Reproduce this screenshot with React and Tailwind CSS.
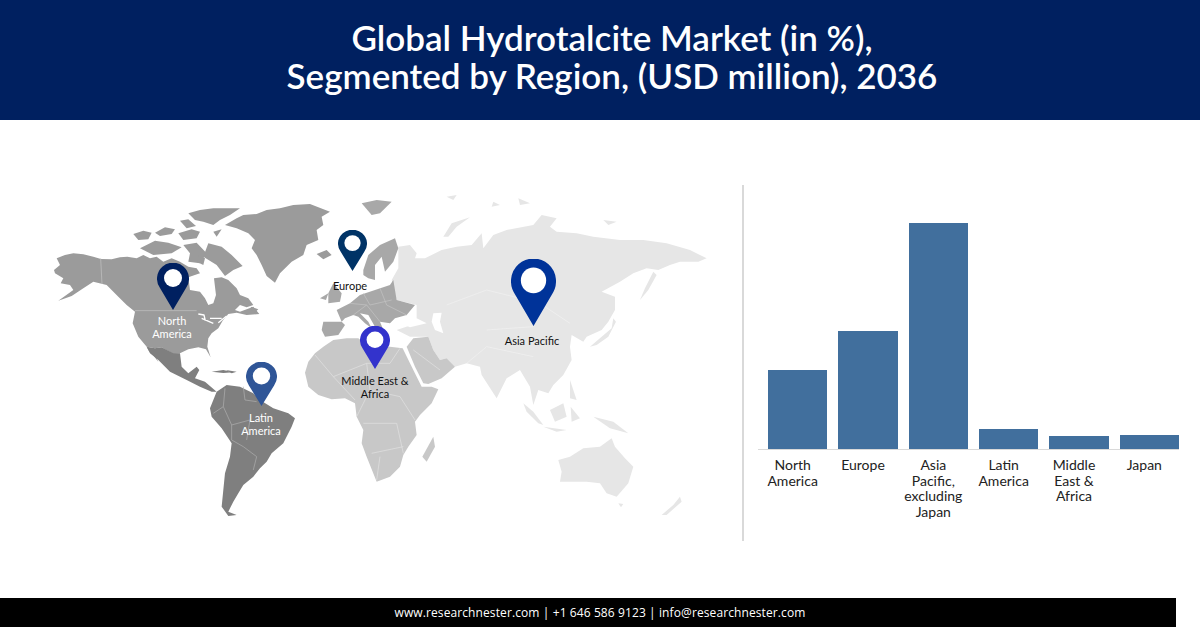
const lato = { fontFamily: 'Lato, "Liberation Sans", sans-serif' };

const bars = [
  { label: ['North', 'America'], height: 'h-[79px]' },
  { label: ['Europe'], height: 'h-[118px]' },
  { label: ['Asia', 'Pacific,', 'excluding', 'Japan'], height: 'h-[226px]' },
  { label: ['Latin', 'America'], height: 'h-[20px]' },
  { label: ['Middle', 'East &', 'Africa'], height: 'h-[13px]' },
  { label: ['Japan'], height: 'h-[14px]' },
];

const pins = [
  { box: 'left-[157px] top-[143px] w-[32px] h-[47px]', color: '#002060' },
  { box: 'left-[338px] top-[110px] w-[29px] h-[41px]', color: '#003366' },
  { box: 'left-[246px] top-[242px] w-[31px] h-[44px]', color: '#2f5597' },
  { box: 'left-[360px] top-[206px] w-[30px] h-[43px]', color: '#3333cc' },
  { box: 'left-[511px] top-[139px] w-[45px] h-[67px]', color: '#003399' },
];

const labels = [
  { box: 'left-[132px] top-[194px] w-[80px] text-white', text: ['North', 'America'] },
  { box: 'left-[310px] top-[159px] w-[80px] text-[#111]', text: ['Europe'] },
  { box: 'left-[221px] top-[291px] w-[80px] text-white', text: ['Latin', 'America'] },
  { box: 'left-[325px] top-[254px] w-[100px] text-[#111]', text: ['Middle East &', 'Africa'] },
  { box: 'left-[482px] top-[214px] w-[100px] text-[#111]', text: ['Asia Pacific'] },
];

function Pin({ box, color }) {
  return (
    <svg className={`absolute ${box}`} viewBox="0 0 32 47" preserveAspectRatio="none">
      <path d="M16 47 L3 25 A16 16 0 1 1 29 25 Z" fill={color} />
      <circle cx="16" cy="15" r="9" fill="#fff" />
    </svg>
  );
}

function WorldMap() {
  return (
    <svg className="block ml-[40px] mt-[70px]" width="680" height="340" viewBox="40 190 680 340">
      {/* traced at 3x, americas */}
      <g transform="translate(40 190) scale(0.3333)" strokeLinejoin="round">
        <g fill="#9b9b9b">
          <path d="M42 240 L60 225 L50 205 L75 195 L100 190 L130 193 L160 200 L183 207 L215 208 L240 202 L262 200 L290 205 L310 195 L330 205 L350 200 L370 215 L395 205 L420 215 L445 230 L470 235 L480 250 L445 262 L450 300 L480 305 L495 325 L505 345 L520 340 L528 315 L525 290 L522 265 L545 262 L565 270 L590 295 L600 315 L625 325 L640 345 L620 352 L600 345 L585 360 L600 365 L640 350 L658 372 L620 375 L590 368 L565 372 L548 392 L535 415 L515 430 L505 445 L502 470 L512 502 L498 478 L475 472 L445 478 L420 490 L400 492 L365 472 L345 475 L320 470 L295 440 L278 400 L285 365 L260 345 L235 320 L200 285 L160 275 L130 295 L95 318 L55 332 L100 300 L90 285 L62 280 L70 265 L45 250 Z" />
          <path d="M555 105 L590 85 L610 75 L650 72 L680 60 L720 55 L760 45 L810 42 L870 65 L845 80 L850 105 L830 120 L835 150 L800 165 L790 195 L755 215 L720 250 L705 278 L680 258 L665 225 L650 195 L635 175 L645 150 L625 130 L590 115 Z" />
          <path d="M830 192 L860 180 L875 195 L850 208 Z" />
          <path d="M445 70 L480 60 L520 55 L600 55 L570 75 L540 90 L520 105 L490 95 L465 90 Z" />
          <path d="M420 92 L445 88 L468 108 L440 115 Z" />
          <path d="M345 128 L375 112 L405 118 L395 132 L360 138 Z" />
          <path d="M280 132 L310 122 L335 128 L325 148 L295 150 Z" />
          <path d="M415 130 L455 118 L480 125 L470 145 L430 150 Z" />
          <path d="M300 175 L345 152 L385 158 L425 172 L395 190 L340 195 Z" />
          <path d="M430 165 L470 158 L500 190 L480 220 L445 215 L450 190 Z" />
          <path d="M505 160 L545 170 L575 195 L608 228 L580 240 L555 258 L530 225 L490 200 Z" />
          <path d="M475 195 L495 205 L490 225 L470 215 Z" />
          <path d="M632 350 L655 358 L640 372 Z" />
          <path d="M520 125 L545 118 L530 140 Z" />
        </g>
        <path d="M182 205 L186 282 M285 362 L470 362" fill="none" stroke="#c4c4c4" strokeWidth="2" />
        <path d="M475 372 L492 375 L496 392 M485 385 L520 400 M510 385 L545 385 M535 398 L560 378" stroke="#fff" strokeWidth="4" fill="none" />
        <g fill="#7f7f7f">
          <path d="M320 470 L345 475 L365 472 L400 490 L420 490 L425 530 L445 550 L470 530 L478 540 L465 565 L495 575 L530 605 L515 605 L480 590 L440 570 L390 545 L355 510 L330 490 Z" />
          <path d="M510 655 L530 605 L560 585 L600 590 L640 610 L660 630 L700 655 L745 670 L765 685 L755 710 L730 760 L695 790 L680 815 L660 835 L640 860 L610 885 L595 910 L580 935 L565 965 L590 975 L565 978 L545 950 L550 900 L555 850 L570 800 L575 760 L545 715 L515 680 Z" />
          <path d="M515 545 L550 540 L580 547 L550 549 Z" />
          <path d="M558 540 L590 545 L575 550 Z" />
          <path d="M320 470 L355 515 L350 505 L325 480 Z" />
        </g>
        <path d="M555 595 L550 650 L520 670 M550 650 L575 705 L575 750 L610 770 L650 800 L640 840 M610 590 L615 630 L650 635 M575 705 L630 690 L620 750" fill="none" stroke="#b0b0b0" strokeWidth="2" />
      </g>

      {/* traced at 3x, old world */}
      <g transform="translate(300 190) scale(0.3333)" strokeLinejoin="round">
        <g fill="#e6e6e6">
          <path d="M295 170 L330 165 L350 190 L345 205 L375 205 L425 180 L470 170 L515 165 L545 130 L550 175 L580 135 L620 120 L700 105 L725 75 L770 85 L750 110 L770 125 L830 130 L880 140 L960 150 L1030 150 L1100 160 L1170 180 L1220 205 L1195 215 L1140 215 L1110 225 L1075 240 L1040 235 L1000 250 L960 275 L905 305 L945 320 L945 360 L925 395 L905 420 L860 440 L850 455 L815 435 L810 470 L815 510 L790 555 L760 585 L745 610 L715 600 L700 645 L690 590 L660 540 L620 565 L590 625 L545 555 L540 530 L500 520 L465 530 L440 505 L420 510 L400 480 L385 440 L330 440 L290 420 L350 400 L350 345 L290 330 L275 270 L295 235 Z" />
          <path d="M430 140 L455 100 L510 82 L470 110 L445 140 Z" />
          <path d="M870 470 L905 440 L935 415 L940 385 L948 395 L925 440 L890 465 Z" />
          <path d="M1020 330 L1035 295 L1060 245 L1070 255 L1045 300 Z" />
          <path d="M670 640 L700 665 L730 705 L715 700 L680 665 Z" />
          <path d="M730 710 L800 720 L770 725 Z" />
          <path d="M750 660 L790 640 L800 680 L765 695 Z" />
          <path d="M810 570 L830 630 L810 625 Z" />
          <path d="M812 650 L840 685 L815 695 Z" />
          <path d="M880 680 L940 695 L985 730 L930 715 Z" />
          <path d="M775 810 L810 800 L850 775 L900 770 L935 745 L945 770 L975 805 L1000 830 L985 880 L950 920 L920 910 L900 880 L860 875 L780 875 L785 845 Z" />
          <path d="M955 940 L970 942 L963 952 Z" />
          <path d="M1085 975 L1120 945 L1140 920 L1145 935 L1100 975 Z" />
          <path d="M655 25 L690 40 L660 45 Z" />
          <path d="M440 20 L470 15 L460 30 Z" />
          <path d="M910 90 L950 95 L925 105 Z" />
          <path d="M580 35 L600 45 L575 50 Z" />
        </g>
        <path d="M400 370 L425 368 L420 395 L430 430 L405 420 L395 395 Z M290 395 L350 385 L380 400 L330 412 Z" fill="#fff" />
        <path d="M440 345 L560 300 M560 300 L720 340 L810 400 M560 420 L700 410 M500 520 L560 470 L700 500" fill="none" stroke="#f2f2f2" strokeWidth="2" />
        <g fill="#a8a8a8">
          <path d="M190 240 L205 195 L240 165 L285 145 L295 175 L280 215 L255 245 L245 200 L225 225 L225 270 L205 265 L190 255 Z" />
          <path d="M125 395 L110 360 L150 340 L180 315 L225 300 L270 285 L280 270 L290 330 L345 345 L320 375 L285 385 L270 400 L240 395 L250 420 L225 410 L205 375 L180 370 L205 395 L215 415 L195 400 L175 380 L160 375 L135 385 Z" />
          <path d="M70 395 L125 395 L135 405 L115 435 L75 440 L65 420 Z" />
          <path d="M85 310 L100 280 L125 310 L120 335 L85 340 Z" />
          <path d="M60 325 L85 310 L78 330 Z" />
          <path d="M185 40 L230 30 L275 35 L240 70 L215 75 Z" />
        </g>
        <path d="M150 340 L200 345 L240 395 M190 310 L210 345 L275 330 M240 295 L260 345 L320 375 M200 345 L160 375" fill="none" stroke="#c4c4c4" strokeWidth="2" />
        <g fill="#c8c8c8">
          <path d="M15 548 L25 515 L45 490 L70 470 L100 450 L140 445 L175 445 L200 465 L240 470 L270 470 L308 475 L330 520 L365 590 L395 590 L415 598 L395 640 L360 675 L345 695 L350 735 L325 770 L310 795 L300 830 L270 860 L230 875 L218 845 L200 800 L185 760 L190 720 L170 680 L165 640 L135 625 L95 628 L55 615 L25 590 Z" />
          <path d="M320 470 L340 445 L385 440 L400 480 L420 510 L440 505 L465 530 L425 565 L385 582 L370 580 L345 530 Z" />
          <path d="M400 740 L405 770 L380 815 L367 800 Z" />
        </g>
        <path d="M45 495 L100 560 L165 630 M100 560 L200 520 L270 520 L300 475 M200 520 L210 600 L300 620 L345 690 M210 600 L170 680 M190 700 L290 700 L310 790 M215 790 L310 770 M340 480 L420 540 M240 800 L230 870" fill="none" stroke="#e2e2e2" strokeWidth="2" />
      </g>
    </svg>
  );
}

export default function App() {
  return (
    <div className="w-[1200px] h-[628px] bg-white flex flex-col overflow-hidden" style={lato}>
      <header className="h-[120px] bg-[#002060] flex flex-col items-center justify-center pl-[24px] pb-[8px] text-white text-[35px] leading-[38px] font-semibold">
        <div>Global Hydrotalcite Market (in %),</div>
        <div>Segmented by Region, (USD million), 2036</div>
      </header>

      <main className="flex h-[478px]">
        <div className="relative w-[742px]">
          <WorldMap />
          {pins.map((p) => (
            <Pin key={p.box} box={p.box} color={p.color} />
          ))}
          {labels.map((l) => (
            <div key={l.box} className={`absolute text-center text-[11px] leading-[13px] ${l.box}`}>
              {l.text.map((t) => (
                <div key={t}>{t}</div>
              ))}
            </div>
          ))}
        </div>

        <div className="w-[2px] h-[356px] mt-[65px] bg-[#d9d9d9]" />

        <div className="ml-[14px] w-[421px] mt-[103px]">
          <div className="grid grid-cols-6 gap-x-[11px] items-end h-[226px] pl-[10px] border-b border-[#d9d9d9] box-content">
            {bars.map((b) => (
              <div key={b.label[0]} className={`bg-[#416f9d] ${b.height}`} />
            ))}
          </div>
          <div className="grid grid-cols-6 gap-x-[11px] pl-[5px] pr-[5px] mt-[7px] text-[14px] leading-[15.5px] text-[#222] text-center">
            {bars.map((b) => (
              <div key={b.label[0]}>
                {b.label.map((t) => (
                  <div key={t}>{t}</div>
                ))}
              </div>
            ))}
          </div>
        </div>
      </main>

      <footer className="w-[1176px] h-[29px] bg-black text-white flex items-center justify-center pl-[24px] text-[12px] tracking-[0.1px]" style={{ fontFamily: '"Open Sans", sans-serif' }}>
        www.researchnester.com | +1 646 586 9123 | info@researchnester.com
      </footer>
    </div>
  );
}
